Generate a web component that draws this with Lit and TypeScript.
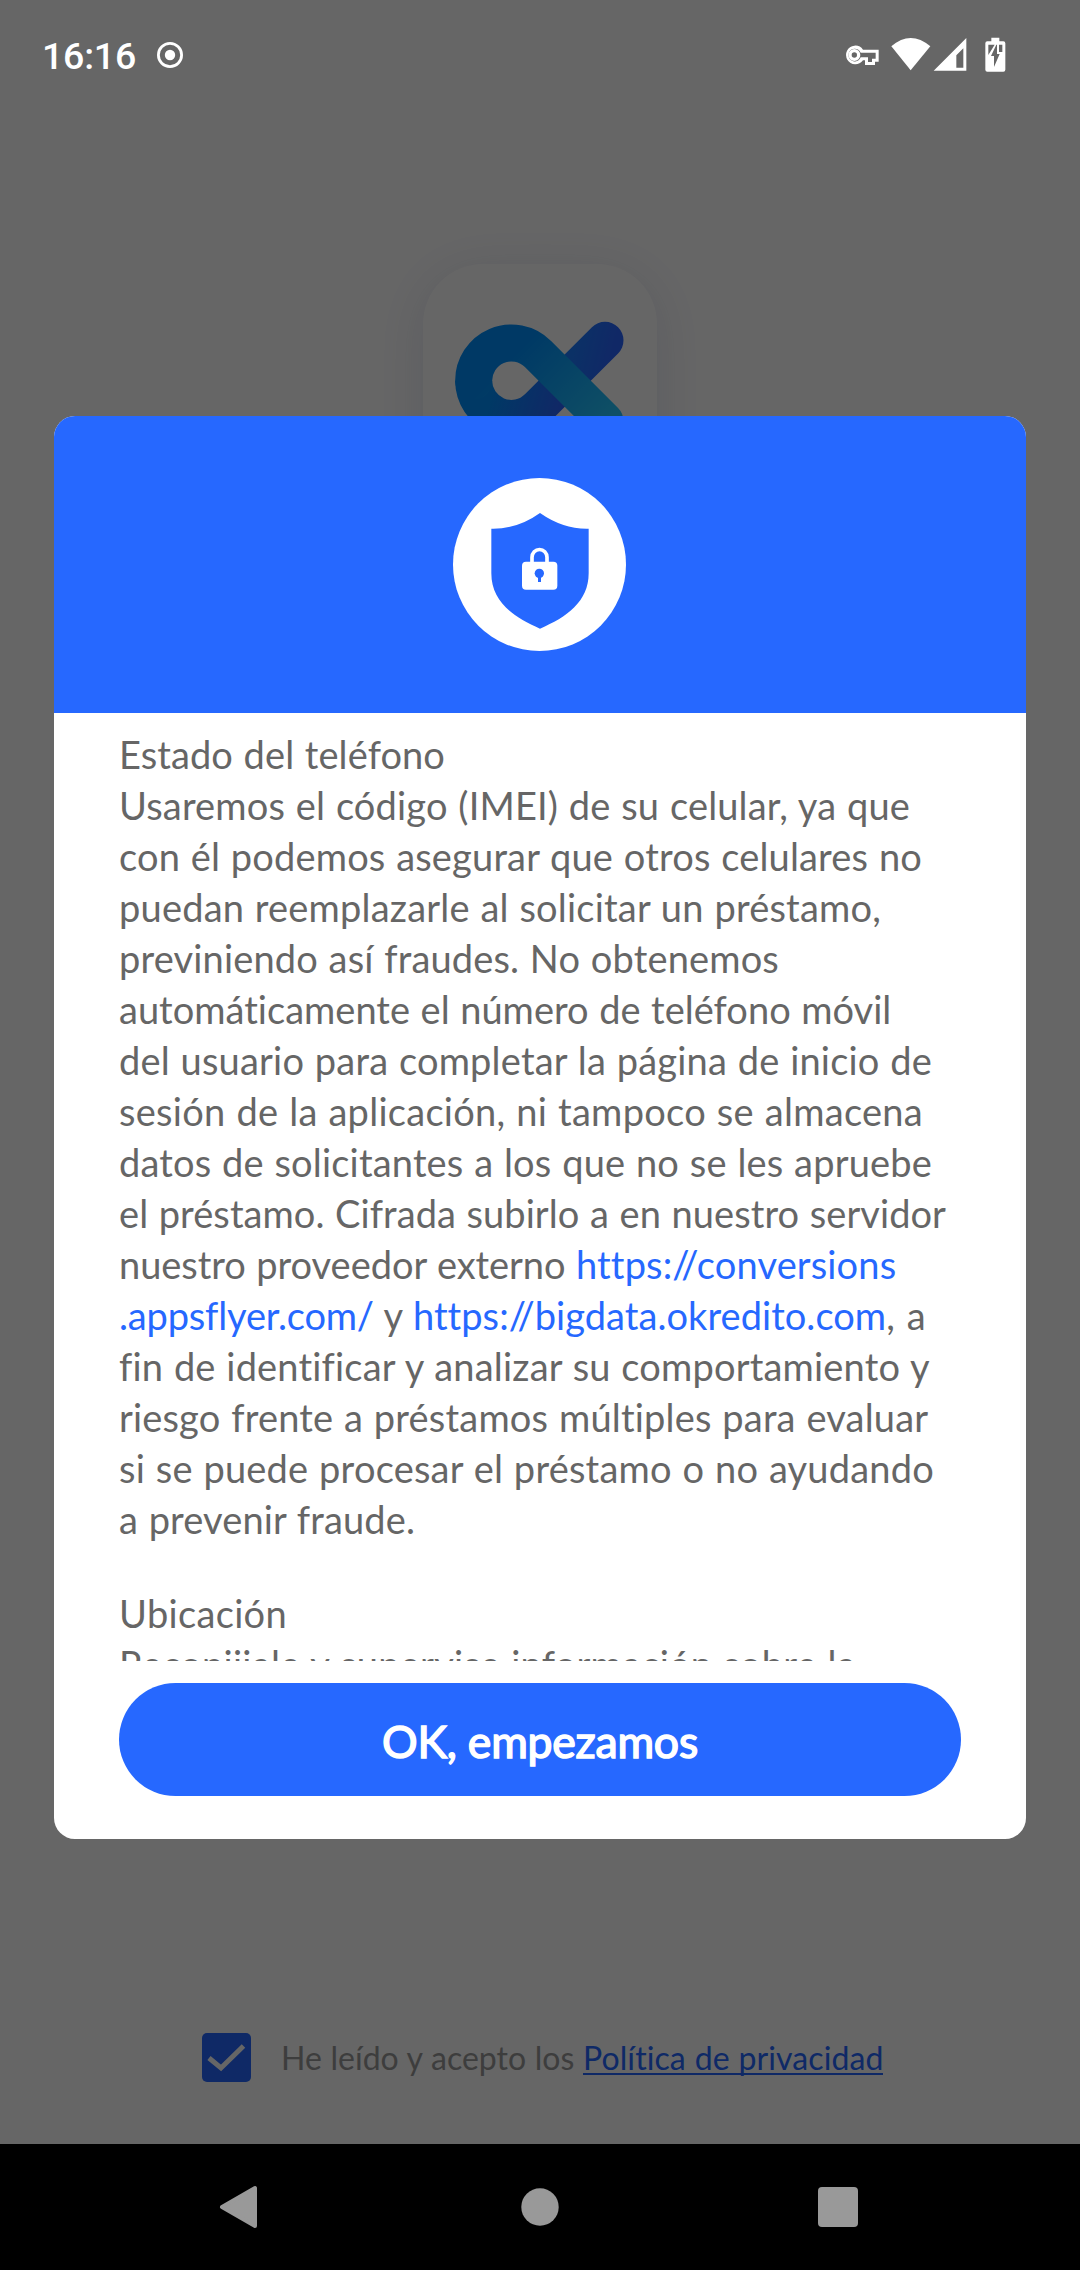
import { LitElement, html, css, svg } from "lit";
import { customElement, property } from "lit/decorators.js";

/** A run of text whose tracking is adjusted so that it fills a given advance width. */
@customElement("fit-text")
class FitText extends LitElement {
  @property({ type: Number }) width = 0;
  @property() text = "";

  static styles = css`
    :host { display: inline-block; white-space: pre; }
    .run { display: inline-block; white-space: pre; }
  `;

  render() {
    return html`<span class="run">${this.text}</span>`;
  }

  updated() {
    const run = this.renderRoot.querySelector(".run") as HTMLElement;
    run.style.letterSpacing = "0px";
    const natural = run.getBoundingClientRect().width;
    run.style.letterSpacing = `${(this.width - natural) / this.text.length}px`;
  }
}

type Segment = { t: string; w: number; link?: boolean };

const PHONE_LINES: Segment[][] = [
  [{ t: "Estado del teléfono", w: 326 }],
  [{ t: "Usaremos el código (IMEI) de su celular, ya que", w: 791 }],
  [{ t: "con él podemos asegurar que otros celulares no", w: 803 }],
  [{ t: "puedan reemplazarle al solicitar un préstamo,", w: 762 }],
  [{ t: "previniendo así fraudes. No obtenemos", w: 660 }],
  [{ t: "automáticamente el número de teléfono móvil", w: 773 }],
  [{ t: "del usuario para completar la página de inicio de", w: 813 }],
  [{ t: "sesión de la aplicación, ni tampoco se almacena", w: 804 }],
  [{ t: "datos de solicitantes a los que no se les apruebe", w: 813 }],
  [{ t: "el préstamo. Cifrada subirlo a en nuestro servidor", w: 827 }],
  [{ t: "nuestro proveedor externo ", w: 457 }, { t: "https://conversions", w: 319, link: true }],
  [
    { t: ".appsflyer.com/", w: 255, link: true },
    { t: " y ", w: 39 },
    { t: "https://bigdata.okredito.com", w: 472, link: true },
    { t: ", a", w: 40 },
  ],
  [{ t: "fin de identificar y analizar su comportamiento y", w: 810 }],
  [{ t: "riesgo frente a préstamos múltiples para evaluar", w: 810 }],
  [{ t: "si se puede procesar el préstamo o no ayudando", w: 815 }],
  [{ t: "a prevenir fraude.", w: 296 }],
];

const LOCATION_LINES: Segment[][] = [
  [{ t: "Ubicación", w: 168 }],
  [{ t: "Recopijjale y supervise información sobre la", w: 737 }],
];

@customElement("app-root")
class AppRoot extends LitElement {
  static styles = css`
    :host {
      display: block;
      position: relative;
      width: 1080px;
      height: 2270px;
      overflow: hidden;
      background: #fff;
      font-family: Lato, "Open Sans", sans-serif;
    }
    svg { display: block; flex: none; }
    .screen {
      display: flex;
      flex-direction: column;
      align-items: center;
      box-sizing: border-box;
      height: 2144px;
      padding: 264px 0 62px;
      justify-content: space-between;
    }
    .logo {
      width: 234px;
      height: 234px;
      border-radius: 60px;
      background: #fff;
      box-shadow: 0 8px 50px rgba(70, 80, 160, 0.15);
    }
    .consent {
      display: flex;
      align-items: center;
      align-self: flex-start;
      margin-left: 202px;
      height: 49px;
      font-size: 32px;
      line-height: 51px;
      color: #999;
      word-spacing: 0.5px;
    }
    .consent svg { margin-right: 30px; }
    .policy {
      color: #2668ff;
      height: 39px;
      line-height: 47px;
      border-bottom: 2px solid #2668ff;
      margin-top: -7px;
    }
    .layer {
      position: absolute;
      inset: 0;
      display: flex;
      flex-direction: column;
    }
    .scrim { background: rgba(0, 0, 0, 0.6); }
    .status {
      display: flex;
      align-items: center;
      height: 110px;
      padding: 0 74px 0 42px;
      box-sizing: border-box;
      color: #fff;
    }
    .time {
      font: 500 37.5px/44px Roboto, sans-serif;
      margin-right: 20px;
      margin-top: 2px;
    }
    .spacer { flex: 1; }
    .dialog {
      margin: 306px 54px 0;
      height: 1423px;
      border-radius: 21px;
      overflow: hidden;
      background: #fff;
      display: flex;
      flex-direction: column;
    }
    .banner {
      flex: none;
      height: 297px;
      background: #2668ff;
      display: flex;
      align-items: center;
      justify-content: center;
    }
    .banner svg { margin-right: 1px; }
    .terms {
      flex: none;
      height: 948px;
      box-sizing: border-box;
      padding: 16px 65px 0;
      overflow: hidden;
      color: #666;
      font-size: 38px;
      line-height: 51px;
      word-spacing: 0.8px;
    }
    .block { margin-bottom: 43px; }
    .line { display: flex; height: 51px; white-space: pre; }
    .link { color: #2668ff; }
    .ok {
      flex: none;
      margin: 22px 65px 0;
      height: 113px;
      border: 0;
      padding: 2px 0 0;
      border-radius: 57px;
      background: #2668ff;
      color: #fff;
      font: 400 44.5px/60px Lato, sans-serif;
      -webkit-text-stroke: 1.5px #fff;
    }
    .bottom { flex: 1; }
    .nav {
      height: 126px;
      box-sizing: border-box;
      padding: 0 221px 0 219px;
      background: #000;
      display: flex;
      align-items: center;
      justify-content: space-between;
    }
    .home { margin-left: 4px; }
  `;

  private lines(rows: Segment[][]) {
    return html`<div class="block">
      ${rows.map(
        (row) => html`<div class="line">${row.map(
          (s) => html`<fit-text class=${s.link ? "link" : "plain"} .text=${s.t} .width=${s.w}></fit-text>`
        )}</div>`
      )}
    </div>`;
  }

  private logo() {
    return svg`<svg width="234" height="234" viewBox="128 101 702 702" fill="none">
      <defs>
        <linearGradient id="rear" gradientUnits="userSpaceOnUse" x1="330" y1="500" x2="530" y2="560">
          <stop offset="0" stop-color="#008ffd"/><stop offset="1" stop-color="#2a64ff"/>
        </linearGradient>
        <linearGradient id="arm" gradientUnits="userSpaceOnUse" x1="570" y1="370" x2="690" y2="400">
          <stop offset="0" stop-color="#1c7cff"/><stop offset="1" stop-color="#2a64ff"/>
        </linearGradient>
        <linearGradient id="front" gradientUnits="userSpaceOnUse" x1="430" y1="340" x2="675" y2="575">
          <stop offset="0" stop-color="#008ffd"/><stop offset="1" stop-color="#26c6fd"/>
        </linearGradient>
      </defs>
      <path d="M520 484 L674 330" stroke="url(#arm)" stroke-width="111" stroke-linecap="round"/>
      <path d="M280 451 A113 113 0 0 0 473 531 L530 474" stroke="url(#rear)" stroke-width="111"/>
      <path d="M280 453 A113 113 0 0 1 473 371 L674 572" stroke="url(#front)" stroke-width="111" stroke-linecap="round"/>
    </svg>`;
  }

  render() {
    return html`
      <div class="screen">
        <div class="logo">${this.logo()}</div>
        <div class="consent">
          <svg width="49" height="49" viewBox="0 0 49 49">
            <rect width="49" height="49" rx="5" fill="#2668ff"/>
            <path d="M7 25 L19 35 L41.5 13" fill="none" stroke="#fff" stroke-width="5"/>
          </svg>
          <fit-text text="He leído y acepto los " width="302"></fit-text>
          <fit-text class="policy" text="Política de privacidad" width="301"></fit-text>
        </div>
      </div>

      <div class="layer scrim">
        <div class="status">
          <fit-text class="time" text="16:16" width="94"></fit-text>
          <svg width="28" height="28" viewBox="0 0 28 28">
            <circle cx="14" cy="14" r="11.6" fill="none" stroke="#fff" stroke-width="2.8"/>
            <circle cx="14" cy="14" r="5.2" fill="#fff"/>
          </svg>
          <div class="spacer"></div>
          <svg width="161" height="36" viewBox="77 52 483 108">
            <path fill-rule="evenodd" d="M105 78 a28 28 0 0 1 26 12 H178 V126 H167 V136 H137 V122 H131 A28 28 0 1 1 105 78z M105 87 a19 19 0 1 0 19 26 H146 V127 H158 V117 H169 V99 H124 a20 20 0 0 0 -19 -12z" fill="#fff"/>
            <circle cx="105" cy="106" r="13" fill="none" stroke="#fff" stroke-width="10"/>
            <path d="M216 80 Q274 30 333 80 L274 152z" fill="#fff"/>
            <path fill-rule="evenodd" d="M441 55 V153 H343z M432 86 L411 107 V144 H432z" fill="#fff"/>
            <path fill-rule="evenodd" d="M516 54 h24 v11 h12 q6 0 6 6 v79 q0 6 -6 6 h-48 q-6 0 -6 -6 v-79 q0 -6 6 -6 h12z M507 75 V106 L526 75z M531 75 L515 109 H524 V142 L541 103 H533 V75z M539 75 V97 H549 V75z" fill="#fff"/>
          </svg>
        </div>

        <div class="dialog">
          <div class="banner">
            <svg width="173" height="173" viewBox="69 54 519 519">
              <circle cx="328.5" cy="313.5" r="259.5" fill="#fff"/>
              <path d="M330 159 Q400 208 476 206 V340 C476 425 410 472 330 506 C250 472 184 425 184 340 V206 Q262 208 330 159z" fill="#2668ff"/>
              <path d="M306 310 V292 a22 23 0 0 1 45 0 V310" fill="none" stroke="#fff" stroke-width="11"/>
              <rect x="276" y="305" width="106" height="84" rx="12" fill="#fff"/>
              <path d="M324 350 h9 v16 h-9z" fill="#2668ff"/>
              <circle cx="328" cy="340" r="14" fill="#2668ff"/>
            </svg>
          </div>
          <div class="terms">
            ${this.lines(PHONE_LINES)}
            ${this.lines(LOCATION_LINES)}
          </div>
          <button class="ok"><fit-text text="OK, empezamos" width="316"></fit-text></button>
        </div>

        <div class="bottom"></div>
        <div class="nav">
          <svg width="39" height="44" viewBox="0 0 39 44">
            <path d="M3 22 L36 3 V41z" fill="#999" stroke="#999" stroke-width="4" stroke-linejoin="round"/>
          </svg>
          <svg class="home" width="38" height="38" viewBox="0 0 38 38"><circle cx="19" cy="19" r="18.7" fill="#999"/></svg>
          <svg width="42" height="42" viewBox="0 0 42 42"><rect x="1" y="1" width="40" height="40" rx="4" fill="#999"/></svg>
        </div>
      </div>
    `;
  }
}
